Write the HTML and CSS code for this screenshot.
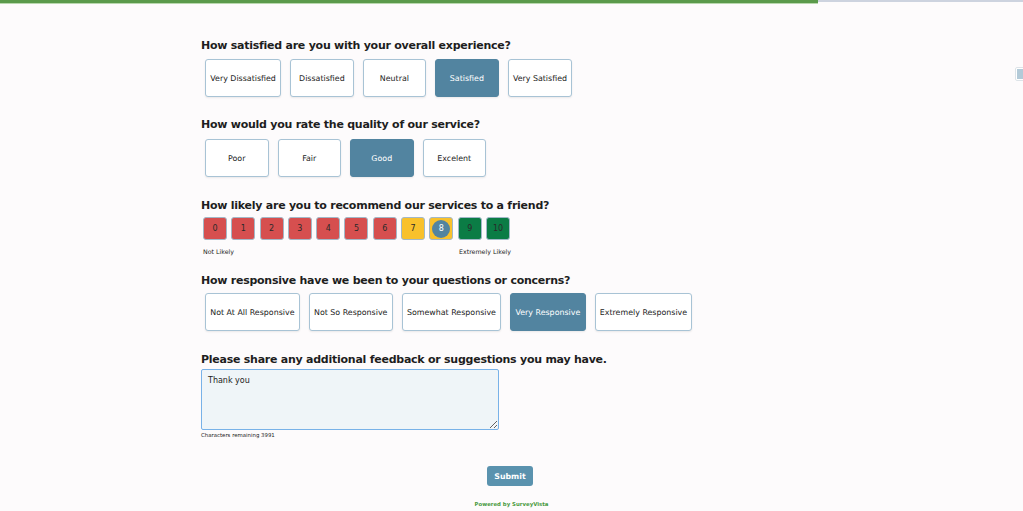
FILE: index.html
```html
<!DOCTYPE html>
<html lang="en">
<head>
<meta charset="utf-8">
<title>Survey</title>
<link rel="stylesheet" href="styles.css">
</head>
<body>
<div class="progress"><div class="progress-fill" style="width:80%"></div></div>
<div class="side-tab"><span></span></div>
<main class="survey">
  <section class="q q1">
    <h2 class="q-title">How satisfied are you with your overall experience?</h2>
    <div class="options">
      <button class="opt">Very Dissatisfied</button>
      <button class="opt">Dissatisfied</button>
      <button class="opt">Neutral</button>
      <button class="opt selected">Satisfied</button>
      <button class="opt">Very Satisfied</button>
    </div>
  </section>
  <section class="q q2">
    <h2 class="q-title">How would you rate the quality of our service?</h2>
    <div class="options">
      <button class="opt">Poor</button>
      <button class="opt">Fair</button>
      <button class="opt selected">Good</button>
      <button class="opt">Excelent</button>
    </div>
  </section>
  <section class="q q3">
    <h2 class="q-title">How likely are you to recommend our services to a friend?</h2>
    <div class="nps">
      <div class="nps-row">
        <span class="nps-box red">0</span>
        <span class="nps-box red">1</span>
        <span class="nps-box red">2</span>
        <span class="nps-box red">3</span>
        <span class="nps-box red">4</span>
        <span class="nps-box red">5</span>
        <span class="nps-box red">6</span>
        <span class="nps-box yellow">7</span>
        <span class="nps-box yellow"><span class="nps-dot">8</span></span>
        <span class="nps-box green">9</span>
        <span class="nps-box green">10</span>
      </div>
      <div class="nps-labels"><span>Not Likely</span><span>Extremely Likely</span></div>
    </div>
  </section>
  <section class="q q4">
    <h2 class="q-title">How responsive have we been to your questions or concerns?</h2>
    <div class="options">
      <button class="opt">Not At All Responsive</button>
      <button class="opt">Not So Responsive</button>
      <button class="opt">Somewhat Responsive</button>
      <button class="opt selected">Very Responsive</button>
      <button class="opt">Extremely Responsive</button>
    </div>
  </section>
  <section class="q q5">
    <h2 class="q-title">Please share any additional feedback or suggestions you may have.</h2>
    <textarea class="feedback">Thank you</textarea>
    <div class="remaining">Characters remaining 3991</div>
  </section>
  <div class="actions">
    <button class="submit">Submit</button>
    <div class="powered">Powered by SurveyVista</div>
  </div>
</main>
</body>
</html>
```
FILE: styles.css
```css
* { box-sizing: border-box; }
html, body { margin: 0; padding: 0; }
body {
  background: #fdfbfc;
  font-family: "DejaVu Sans", Verdana, sans-serif;
  color: #222;
  height: 511px;
  overflow: hidden;
}
.progress {
  height: 2px;
  background: #cdd3df;
  position: relative;
}
.progress-fill {
  height: 4px;
  background: #5b9a4b;
  border-bottom: 1px solid #b9d8ae;
}
.side-tab {
  position: fixed;
  right: -2px;
  top: 67px;
  width: 10px;
  height: 14px;
  border: 1px solid #dde3e8;
  border-radius: 2px;
  background: #fff;
  padding: 1px;
}
.side-tab span {
  display: block;
  width: 100%;
  height: 100%;
  background: #b3cad8;
}
.survey {
  width: 621px;
  margin: 0 auto;
  padding-top: 36px;
}
.q-title {
  font-size: 11px;
  font-weight: bold;
  line-height: 16px;
  margin: 0;
  color: #1e1e1e;
  letter-spacing: -0.25px;
}
.options {
  display: flex;
  gap: 9px;
  padding-left: 4px;
  margin-top: 6px;
}
.opt {
  height: 38px;
  min-width: 63.5px;
  padding: 0 4.25px;
  background: #fff;
  border: 1px solid #a8c3d5;
  border-radius: 3px;
  box-shadow: 0 1px 2px rgba(0, 0, 0, 0.08);
  font-family: "DejaVu Sans", Verdana, sans-serif;
  font-size: 7.9px;
  color: #222;
}
.opt.selected {
  background: #5284a0;
  border-color: #5284a0;
  color: #fff;
}
.q1 .options { margin-top: 5px; }
.q2 { margin-top: 20px; }
.q3 { margin-top: 21px; }
.q4 { margin-top: 18px; }
.q4 .options { margin-top: 4px; }
.q5 { margin-top: 21px; }
.nps { width: 310px; margin-top: 3px; padding-left: 2px; }
.nps-row { display: flex; gap: 4.3px; }
.nps-box {
  width: 24px;
  height: 23px;
  border: 1px solid #a2b8c8;
  border-radius: 3px;
  display: flex;
  align-items: center;
  justify-content: center;
  font-size: 8px;
  color: #2a2a2a;
}
.nps-box.red { background: #d64f4f; }
.nps-box.yellow { background: #f8c12c; }
.nps-box.green { background: #0b7c45; }
.nps-dot {
  width: 18px;
  height: 18px;
  border-radius: 50%;
  background: #5284a0;
  color: #fff;
  display: flex;
  align-items: center;
  justify-content: center;
}
.nps-labels {
  display: flex;
  justify-content: space-between;
  font-size: 6.3px;
  color: #222;
  margin-top: 8px;
  padding-right: 0;
}
.feedback {
  display: block;
  width: 298px;
  height: 61px;
  margin-top: 1px;
  background: #eff5f8;
  border: 1px solid #78b2e8;
  border-radius: 2px;
  padding: 6px 6px;
  font-family: "DejaVu Sans", Verdana, sans-serif;
  font-size: 8px;
  color: #222;
  resize: vertical;
  outline: none;
}
.remaining {
  font-size: 5.4px;
  margin-top: 2px;
  color: #222;
}
.actions {
  display: flex;
  flex-direction: column;
  align-items: center;
  margin-top: 28px;
}
.submit {
  width: 46px;
  height: 20px;
  background: #5a92ae;
  border: none;
  border-radius: 3px;
  color: #fff;
  font-family: "DejaVu Sans", Verdana, sans-serif;
  font-weight: bold;
  font-size: 7.8px;
  margin-left: -3px;
}
.powered {
  margin-top: 15px;
  font-size: 5.4px;
  font-weight: bold;
  color: #4a9a3f;
}
```
